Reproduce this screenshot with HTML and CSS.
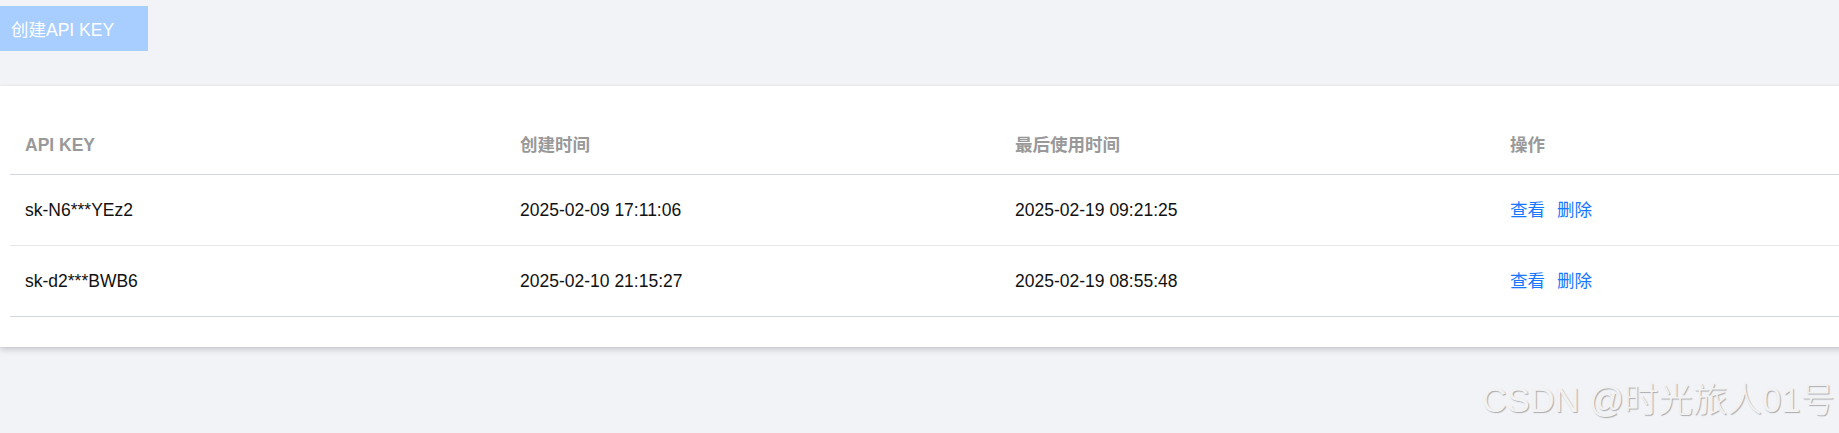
FILE: index.html
```html
<!DOCTYPE html>
<html lang="zh-CN">
<head>
<meta charset="utf-8">
<title>API KEY</title>
<link rel="stylesheet" href="styles.css">
</head>
<body>
<div class="page">
  <div class="toolbar">
    <button class="create-btn" type="button">创建API KEY</button>
  </div>
  <div class="card">
    <table class="key-table">
      <colgroup>
        <col class="col"><col class="col"><col class="col"><col class="col">
      </colgroup>
      <thead>
        <tr>
          <th>API KEY</th>
          <th>创建时间</th>
          <th>最后使用时间</th>
          <th>操作</th>
        </tr>
      </thead>
      <tbody>
        <tr>
          <td>sk-N6***YEz2</td>
          <td>2025-02-09 17:11:06</td>
          <td>2025-02-19 09:21:25</td>
          <td><a class="act" href="#">查看</a><a class="act" href="#">删除</a></td>
        </tr>
        <tr>
          <td>sk-d2***BWB6</td>
          <td>2025-02-10 21:15:27</td>
          <td>2025-02-19 08:55:48</td>
          <td><a class="act" href="#">查看</a><a class="act" href="#">删除</a></td>
        </tr>
      </tbody>
    </table>
  </div>
</div>
<div class="watermark">CSDN @时光旅人01号</div>
</body>
</html>
```
FILE: styles.css
```css
html, body {
  margin: 0;
  padding: 0;
}
body {
  background: #f2f3f7;
  font-family: "Liberation Sans", Arial, "Noto Sans CJK SC", sans-serif;
  font-size: 18px;
  color: #111;
  width: 1839px;
  height: 433px;
  overflow: hidden;
  position: relative;
}
.page {
  padding-top: 6px;
}
.toolbar {
  display: flex;
  height: 45px;
}
.create-btn {
  width: 148px;
  height: 45px;
  border: none;
  background: #a8cdff;
  color: #ffffff;
  font-family: "Liberation Sans", Arial, "Noto Sans CJK SC", sans-serif;
  font-size: 17.5px;
  text-align: left;
  padding: 0 0 0 11px;
  margin: 0;
}
.card {
  margin-top: 35px;
  width: 2010px;
  background: #ffffff;
  box-shadow: 0 0 1px rgba(0, 0, 0, 0.12), 0 3px 6px rgba(0, 0, 0, 0.16);
  padding: 30px 0 30px 10px;
  box-sizing: border-box;
}
.key-table {
  width: 1980px;
  border-collapse: collapse;
  table-layout: fixed;
}
.col {
  width: 495px;
}
.key-table th {
  text-align: left;
  font-weight: bold;
  color: #999999;
  font-size: 17.5px;
  line-height: 20px;
  padding: 19px 15px 19px 15px;
  border-bottom: 1px solid #d1d6df;
}
.key-table td {
  text-align: left;
  font-size: 17.5px;
  line-height: 20px;
  padding: 25px 15px;
  color: #111111;
  border-bottom: 1px solid #e6e7e9;
}
.key-table tbody tr:last-child td {
  border-bottom: 1px solid #d1d6df;
}
.act {
  color: #1677ff;
  text-decoration: none;
  margin-right: 12px;
}
.watermark {
  position: absolute;
  right: 4px;
  bottom: 15px;
  font-family: "Liberation Sans", Arial, "Noto Sans CJK SC", sans-serif;
  font-size: 34.5px;
  font-weight: 300;
  line-height: 36px;
  color: #f2f2f2;
  text-shadow: 1px 1px 1px rgba(0, 0, 0, 0.3);
  white-space: nowrap;
}
```
